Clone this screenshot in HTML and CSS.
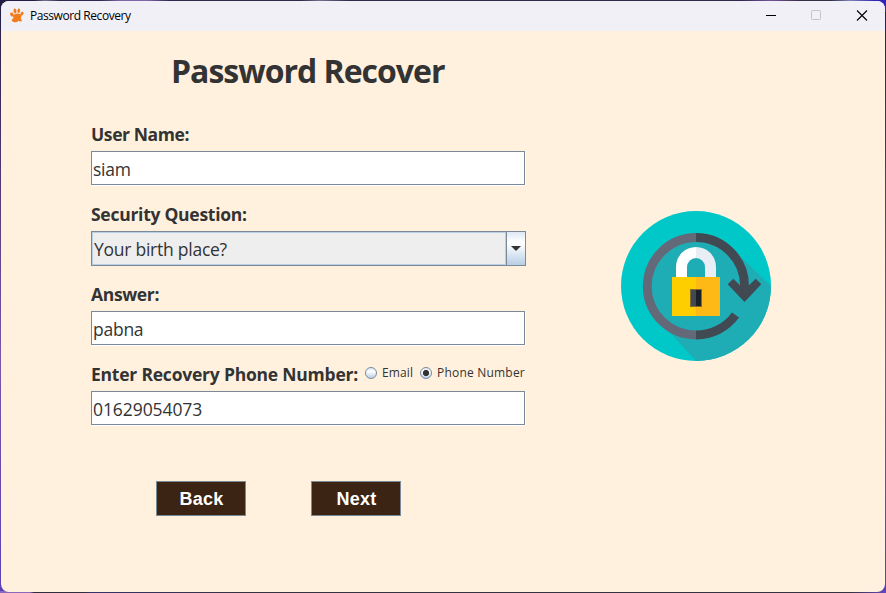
FILE: index.html
```html
<!DOCTYPE html>
<html lang="en">
<head>
<meta charset="utf-8">
<title>Password Recovery</title>
<link rel="stylesheet" href="styles.css">
</head>
<body>
<div class="window">
  <header class="titlebar">
    <svg class="paw" width="14" height="16" viewBox="0 0 14 16" fill="#f27b1b">
      <ellipse cx="1.9" cy="6.5" rx="1.6" ry="2.1" transform="rotate(-25 1.9 6.5)"/>
      <ellipse cx="5" cy="3" rx="1.5" ry="2.4" transform="rotate(-8 5 3)"/>
      <ellipse cx="8.8" cy="2.7" rx="1.4" ry="2.3" transform="rotate(8 8.8 2.7)"/>
      <ellipse cx="12" cy="5.6" rx="1.4" ry="2" transform="rotate(25 12 5.6)"/>
      <path d="M3 7.6Q5 5.5 8 5.6T11.4 8.3L10.8 10.5L12.2 13L10 13.4L8.4 12.8Q7 14.8 4.5 14.2L2 13.2L1.8 11.6L3.4 10.2Z"/>
    </svg>
    <span class="caption">Password Recovery</span>
    <svg class="controls" width="104" height="12" viewBox="0 0 104 12" fill="none">
      <path d="M1 5.5H11" stroke="#000"/>
      <rect x="46.5" y="0.500" width="9" height="9" rx="1" stroke="#c4c3c9"/>
      <path d="M92 0.500L102 10.500M102 0.500L92 10.500" stroke="#000" stroke-width="1.1"/>
    </svg>
  </header>
  <main class="content">
    <form class="form">
      <h1 class="heading"><span>Password Recover</span></h1>
      <div class="label"><span class="l-user">User Name:</span></div>
      <div class="field"><span class="v-user">siam</span></div>
      <div class="label"><span class="l-question">Security Question:</span></div>
      <div class="combo">
        <div class="combo-value"><span class="v-question">Your birth place?</span></div>
        <div class="combo-arrow"><svg width="10" height="5" viewBox="0 0 10 5"><path d="M0 0H10L5 5Z" fill="#333"/></svg></div>
      </div>
      <div class="label"><span class="l-answer">Answer:</span></div>
      <div class="field"><span class="v-answer">pabna</span></div>
      <div class="label">
        <span class="l-recovery">Enter Recovery Phone Number:</span>
        <div class="options">
          <i class="radio"></i><span class="o-email">Email</span>
          <i class="radio checked"></i><span class="o-phone">Phone Number</span>
        </div>
      </div>
      <div class="field"><span class="v-phone">01629054073</span></div>
      <div class="actions">
        <button type="button">Back</button>
        <button type="button">Next</button>
      </div>
    </form>
    <svg class="lock" width="150" height="150" viewBox="0 0 150 150">
      <circle cx="75" cy="75" r="75" fill="#00c8c8"/>
      <path d="M75 26L112 38L150 75A75 75 0 0 1 75 150L40 112L27 75Z" fill="#1fadb5"/>
      <circle cx="75" cy="75" r="46" fill="#1fadb5"/>
      <path d="M75 26.500A48.500 48.500 0 0 0 75 124" fill="none" stroke="#636978" stroke-width="8.800"/>
      <path d="M75 26.500A48.500 48.500 0 0 1 123.500 77M75 124A48.500 48.500 0 0 0 114.500 104" fill="none" stroke="#414952" stroke-width="8.800"/>
      <path d="M106.700 73.300L112.300 67.700L119 74.300H128L134.700 67.700L140.300 73.300L123.500 91Z" fill="#414952"/>
      <path d="M75 36A20 20 0 0 0 55 56V67H66V56A9 9 0 0 1 75 47Z" fill="#fff"/>
      <path d="M75 36A20 20 0 0 1 95 56V67H84V56A9 9 0 0 0 75 47Z" fill="#e9edf5"/>
      <path d="M51 66H75V105H51Z" fill="#ffce00"/>
      <path d="M75 66H99V105H75Z" fill="#ffb916"/>
      <path d="M69 78H81V96H69Z" fill="#846b2b"/>
      <path d="M70 79H75V95H70Z" fill="#414952"/>
      <path d="M75 79H80V95H75Z" fill="#1b2129"/>
    </svg>
  </main>
</div>
</body>
</html>
```
FILE: styles.css
```css
* { box-sizing: border-box; }
body {
  margin: 0;
  width: 886px;
  height: 593px;
  padding: 1px;
  overflow: hidden;
  background:
    linear-gradient(90deg, #8c68bc 0 30px, #2f2c3d 34px 84px, #35336a 90px, #343140 250px 850px, #6648bd) bottom / 100% 2px no-repeat,
    linear-gradient(90deg, #241d45 0 34px, #77738a 45px, #30284f 60px 100px, #8066a8 120px 148px, #30274c 170px 300px, #74718b 320px, #30274c 350px 740px, #76549e 770px, #352f48 800px 830px, #7b85b5 850px, #3424b5 875px) top / 100% 12px no-repeat,
    linear-gradient(#241d45, #7b55a8 60%, #5942b5);
  font-family: "Open Sans", "Noto Sans", sans-serif;
  color: #333;
}
.window {
  display: flex;
  flex-direction: column;
  width: 884px;
  height: 591px;
  border-radius: 8px;
  overflow: hidden;
  background: #fff1de;
}
.titlebar {
  display: flex;
  align-items: center;
  height: 30px;
  flex: none;
  padding: 0 16px 0 9px;
  background: #f2f0f7;
}
.caption {
  margin-left: 6px;
  font: 12px/30px "Open Sans", sans-serif;
  letter-spacing: -.43px;
  color: #000;
}
.controls { margin-left: auto; }
.content { display: flex; align-items: flex-start; }
.form { width: 435px; margin-left: 90px; }
.heading {
  height: 80px;
  margin: 0 0 0 80px;
  font-size: 32px;
  line-height: 80px;
  font-weight: 700;
  letter-spacing: -1px;
  white-space: nowrap;
}
.label {
  display: flex;
  align-items: center;
  height: 24px;
  margin: 12px 0 4px;
  padding-bottom: 2px;
  font-size: 17.5px;
  line-height: 24px;
  font-weight: 700;
  white-space: nowrap;
}
.l-user { letter-spacing: -.4px; }
.l-question { letter-spacing: -.27px; }
.l-answer { letter-spacing: -.35px; }
.l-recovery { letter-spacing: -.22px; }
.field {
  display: flex;
  align-items: center;
  width: 434px;
  height: 34px;
  margin-bottom: 18px;
  padding: 1px 0 0 1px;
  border: 1px solid #7a8a99;
  background: #fff;
  box-shadow: 1px 1px #fff;
  font-size: 17.5px;
  line-height: 24px;
  letter-spacing: -.25px;
}
.v-phone { letter-spacing: -.08px; }
.combo {
  display: flex;
  height: 35px;
  margin-bottom: 17px;
  border: 1px solid #7a8a99;
}
.combo-value {
  flex: 1;
  border: 1px solid #b8cfe5;
  background: #eee;
  padding: 4px 0 0 1px;
  font-size: 17.5px;
  line-height: 24px;
  letter-spacing: -.25px;
}
.combo-arrow {
  display: flex;
  align-items: center;
  justify-content: center;
  width: 19px;
  border-left: 1px solid #7a8a99;
  background: linear-gradient(#dde8f3, #fff 30%, #fff 35%, #b8cfe5);
}
.options {
  display: flex;
  align-items: center;
  margin: -2px 0 0 7px;
  font-size: 12px;
  font-weight: 400;
}
.radio {
  width: 12px;
  height: 12px;
  border: 1px solid #7a8a99;
  border-radius: 50%;
  background: linear-gradient(#dde8f3, #fff 35%, #b8cfe5);
}
.options span { margin: 0 7px 0 5px; }
.options .o-email { letter-spacing: .1px; }
.options .o-phone { letter-spacing: .2px; }
.radio.checked {
  background: radial-gradient(circle, #333 0 2.8px, transparent 3.3px), linear-gradient(#dde8f3, #fff 35%, #b8cfe5);
}
.actions { display: flex; gap: 65px; margin: 56px 0 0 65px; }
.actions button {
  width: 90px;
  height: 35px;
  padding: 1px 0 0 1px;
  border: 1px solid #7a8a99;
  background: #3c2415;
  color: #fff;
  font: bold 18px "Liberation Sans", sans-serif;
  letter-spacing: .2px;
}
.lock { margin: 180px 0 0 95px; }
```
